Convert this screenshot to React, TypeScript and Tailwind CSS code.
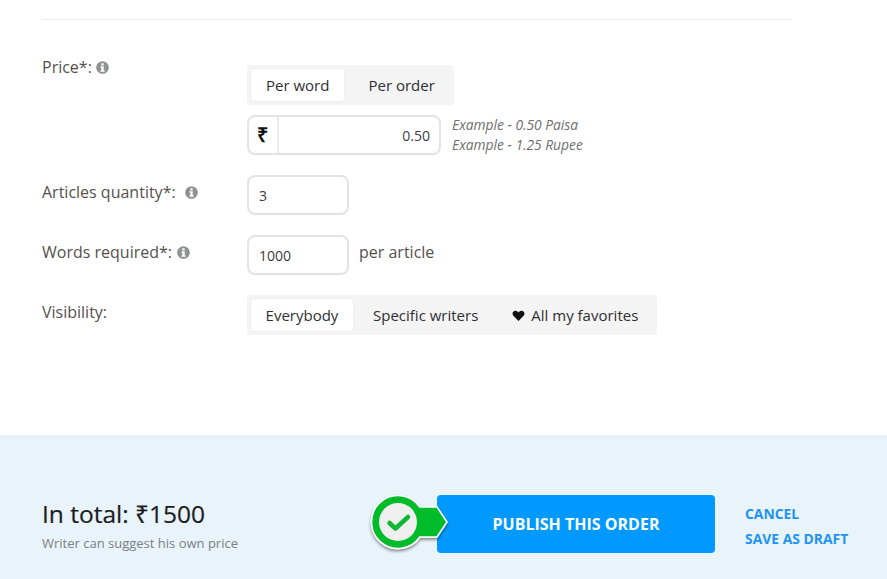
import React from 'react';

const font = "font-['Open_Sans',sans-serif]";

const InfoDot = ({ className = '' }: { className?: string }) => (
  <svg viewBox="0 0 14 14" className={`h-[13px] w-[13px] ${className}`}>
    <circle cx="7" cy="7" r="6.8" fill="#8f9192" />
    <rect x="5.7" y="2.5" width="2.6" height="2.2" fill="#fff" />
    <path d="M4.7 5.600h3.600v4.500h1.100v1.400H4.700v-1.400h1V7h-1z" fill="#fff" />
  </svg>
);

type SegmentItem = { label: React.ReactNode; className: string };

const Segmented = ({ items }: { items: SegmentItem[] }) => (
  <div className="inline-flex h-10 items-center rounded-[3px] bg-[#f4f4f4] pl-1 pr-1">
    {items.map((item, i) => (
      <div
        key={i}
        className={`flex h-8 items-center rounded-[3px] text-[15px] text-[#2f2f33] ${item.className}`}
      >
        {item.label}
      </div>
    ))}
  </div>
);

const Badge = () => (
  <svg viewBox="0 0 84 64" className="absolute left-[-70px] top-[-3px] h-16 w-[84px]">
    <defs>
      <filter id="drop" x="-20%" y="-20%" width="140%" height="140%">
        <feDropShadow dx="0" dy="2" stdDeviation="1.6" floodColor="#000" floodOpacity="0.45" />
      </filter>
    </defs>
    <g filter="url(#drop)">
      <path
        d="M52.800 15H70L80 30 70 45H52.800A26.500 26.500 0 1 1 52.800 15z"
        fill="#00bb2a"
        stroke="#fff"
        strokeWidth="1.600"
      />
    </g>
    <circle cx="31" cy="30" r="19" fill="#efefef" />
    <path d="M22.500 31l6 5.500L41 25" fill="none" stroke="#0eb836" strokeWidth="4.500" strokeLinecap="round" strokeLinejoin="round" />
  </svg>
);

const Field = ({ value, width }: { value: string; width: string }) => (
  <div className={`flex h-10 items-center rounded-lg border-2 border-[#e3e3e3] bg-white px-[10px] text-[14px] text-[#3c3c3c] ${width}`}>
    {value}
  </div>
);

const App: React.FC = () => {
  return (
    <div className={`flex h-[579px] w-[887px] flex-col overflow-hidden bg-white ${font}`}>
      <div className="h-[435px] px-[42px] pt-[19px]">
        <div className="w-[750px] border-t border-[#ececec]" />

        {/* Price */}
        <div className="mt-9 flex">
          <div className="flex h-[22px] w-[205px] items-center gap-1 text-[16px] text-[#55504e]">
            Price*: <InfoDot />
          </div>
          <div className="pt-[9px]">
            <Segmented
              items={[
                { label: 'Per word', className: 'bg-white px-[15px] shadow-[0_0_2px_rgba(0,0,0,0.08)]' },
                { label: 'Per order', className: 'ml-[9px] px-[15px]' },
              ]}
            />
            <div className="mt-[10px] flex items-center">
              <div className="flex h-10 w-[194px] overflow-hidden rounded-lg border-2 border-[#e3e3e3] bg-white">
                <div className="flex w-[30px] items-center justify-center border-r-2 border-[#ececec] pr-[2px] text-[20px] font-semibold text-[#111]">
                  ₹
                </div>
                <div className="flex flex-1 items-center justify-end pr-[9px] text-[14px] text-[#3c3c3c]">0.50</div>
              </div>
              <div className="ml-[11px] text-[13.800px] italic leading-[20px] text-[#6f6f6f]">
                <div>Example - 0.50 Paisa</div>
                <div>Example - 1.25 Rupee</div>
              </div>
            </div>
          </div>
        </div>

        {/* Articles quantity */}
        <div className="mt-5 flex">
          <div className="flex h-[34px] w-[205px] items-center text-[16px] text-[#55504e]">
            Articles quantity*:
            <InfoDot className="ml-[9px]" />
          </div>
          <Field value="3" width="w-[102px]" />
        </div>

        {/* Words required */}
        <div className="mt-5 flex">
          <div className="flex h-[34px] w-[205px] items-center gap-[5px] text-[16px] text-[#55504e]">
            Words required*: <InfoDot />
          </div>
          <Field value="1000" width="w-[102px]" />
          <div className="ml-[10px] h-[34px] text-[16px] leading-[34px] text-[#55504e]">per article</div>
        </div>

        {/* Visibility */}
        <div className="mt-5 flex">
          <div className="flex h-[34px] w-[205px] items-center text-[16px] text-[#55504e]">Visibility:</div>
          <Segmented
            items={[
              { label: 'Everybody', className: 'w-[102px] justify-center bg-white shadow-[0_0_2px_rgba(0,0,0,0.08)]' },
              { label: 'Specific writers', className: 'ml-[5px] px-[15px]' },
              {
                label: (
                  <span className="flex items-center gap-[6px]">
                    <svg viewBox="0 0 24 24" className="h-[13px] w-[13px]" fill="#111">
                      <path d="M12 22 2.500 12.300C-.5 9 1 3 6.500 3 9 3 11 4.500 12 6.500 13 4.500 15 3 17.500 3 23 3 24.500 9 21.500 12.300z" />
                    </svg>
                    All my favorites
                  </span>
                ),
                className: 'ml-1 px-[15px]',
              },
            ]}
          />
        </div>
      </div>

      {/* Footer */}
      <div className="flex h-36 items-start bg-[#e8f3fa] pl-[42px]">
        <div className="w-[395px] pt-[61px]">
          <div className="text-[24.500px] leading-[36px] text-[#1d1d1f] [-webkit-text-stroke:0.2px_#1d1d1f]">In total: ₹1500</div>
          <div className="mt-[2px] text-[13px] leading-[18px] text-[#7c8083]">Writer can suggest his own price</div>
        </div>
        <div className="relative mt-[60px] flex h-[58px] w-[278px] items-center justify-center rounded-[4px] bg-[#0099ff] text-[16px] font-bold text-white">
          PUBLISH THIS ORDER
          <Badge />
        </div>
        <div className="ml-[30px] mt-[67px] text-[13.900px] font-bold leading-[23px] text-[#1f93f3]">
          <div>CANCEL</div>
          <div className="mt-[2px]">SAVE AS DRAFT</div>
        </div>
      </div>
    </div>
  );
};

export default App;
